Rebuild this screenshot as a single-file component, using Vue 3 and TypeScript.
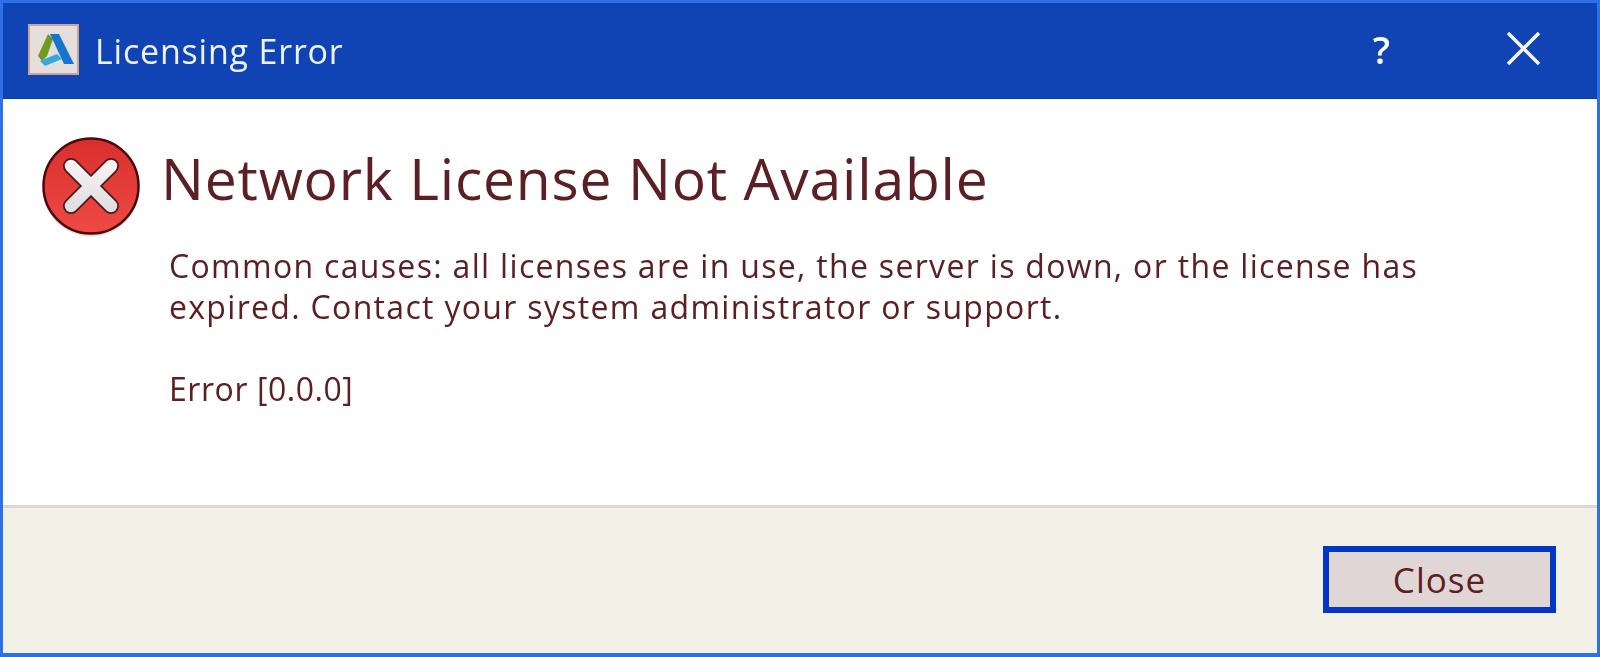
<script setup lang="ts">
const title = 'Licensing Error'
</script>

<template>
  <div class="win">
    <header class="bar">
      <svg class="logo" width="51" height="51" viewBox="0 0 51 51">
        <rect x="1" y="1" width="49" height="49" fill="#e6dedb" stroke="#c9a595" stroke-width="2"/>
        <path d="M10 32 L20 10 L25 15 L19 32 L14 37 Z" fill="#6f9a1f"/>
        <path d="M12 37 L19 34 L29 30 L34 35 L17 42 Z" fill="#35a8e0"/>
        <path d="M22 10 L31 10 L46 40 L36 40 Z" fill="#1476cf"/>
      </svg>
      <span class="title">{{ title }}</span>
      <span class="help">?</span>
      <svg class="x" width="35" height="35" viewBox="0 0 35 35">
        <path d="M2 2 L33 33 M33 2 L2 33" stroke="#f4f6fb" stroke-width="3.4" fill="none"/>
      </svg>
    </header>
    <main class="body">
      <svg class="err" width="100" height="104" viewBox="0 0 100 104">
        <defs>
          <linearGradient id="g" x1="0" y1="0" x2="0" y2="1">
            <stop offset="0" stop-color="#d92f2c"/>
            <stop offset="1" stop-color="#ef4a45"/>
          </linearGradient>
          <linearGradient id="c" x1="0" y1="0" x2="0" y2="1">
            <stop offset="0" stop-color="#f4f2f4"/>
            <stop offset="1" stop-color="#e2dfe3"/>
          </linearGradient>
        </defs>
        <circle cx="49" cy="52" r="48.5" fill="#c9a9a9" opacity="0.45"/>
        <circle cx="49" cy="50" r="47.5" fill="url(#g)" stroke="#4a0a0c" stroke-width="2.5"/>
        <path d="M29 30 L69 70 M69 30 L29 70" stroke="#4a1a1c" stroke-width="16" stroke-linecap="round"/>
        <path d="M29 30 L69 70 M69 30 L29 70" stroke="url(#c)" stroke-width="12.5" stroke-linecap="round"/>
      </svg>
      <div class="text">
        <h1>Network License Not Available</h1>
        <p>Common causes: all licenses are in use, the server is down, or the license has<br/>expired. Contact your system administrator or support.</p>
        <p class="code">Error [0.0.0]</p>
      </div>
    </main>
    <footer class="foot">
      <button class="close">Close</button>
    </footer>
  </div>
</template>

<style>
html, body { margin: 0; background: #fff; }
</style>

<style scoped>
.win {
  box-sizing: border-box;
  width: 1600px;
  height: 657px;
  border: 3px solid #2a72e6;
  border-bottom-width: 4px;
  display: flex;
  flex-direction: column;
  font-family: "Open Sans", "Noto Sans", sans-serif;
  color: #5c2024;
  background: #fff;
}
.bar {
  flex: none;
  height: 96px;
  box-sizing: border-box;
  background: #1043b4;
  border-bottom: 1px solid #0a3aae;
  display: flex;
  align-items: center;
  padding: 0 56px 0 25px;
  color: #fff;
}
.logo { flex: none; margin: -2px 16px 0 0; filter: blur(0.7px); }
.title {
  flex: 1;
  font-size: 34px;
  letter-spacing: 0.8px;
  color: #eef2fb;
  filter: blur(0.4px);
}
.help {
  font-size: 38px;
  font-weight: 600;
  line-height: 1;
  margin: -4px 116px 0 0;
  filter: blur(0.5px);
}
.x { flex: none; margin-top: -4px; filter: blur(0.5px); }
.body {
  flex: 1;
  display: flex;
  padding: 37px 0 0 39px;
}
.err { flex: none; margin-right: 19px; filter: blur(0.6px); }
.text { padding-top: 2px; filter: blur(0.4px); }
.text h1 {
  margin: 0 0 27px;
  font-size: 57px;
  letter-spacing: 0.8px;
  line-height: 80px;
  font-weight: 400;
}
.text p {
  margin: 0 0 0 8px;
  font-size: 32px;
  letter-spacing: 1.32px;
  line-height: 41px;
}
.text .code { margin-top: 41px; letter-spacing: 0.55px; }
.foot {
  flex: none;
  height: 148px;
  box-sizing: border-box;
  border-top: 3px solid #e0d5d2;
  background: #f3f0e7;
  display: flex;
  justify-content: flex-end;
  align-items: flex-start;
  padding: 38px 41px 0 0;
}
.close {
  width: 233px;
  height: 67px;
  box-sizing: border-box;
  border: 6px solid #0236c6;
  background: #e0d6d5;
  color: #5c2024;
  font: 35px "Open Sans", sans-serif;
  letter-spacing: 1px;
  padding: 0;
}
</style>
